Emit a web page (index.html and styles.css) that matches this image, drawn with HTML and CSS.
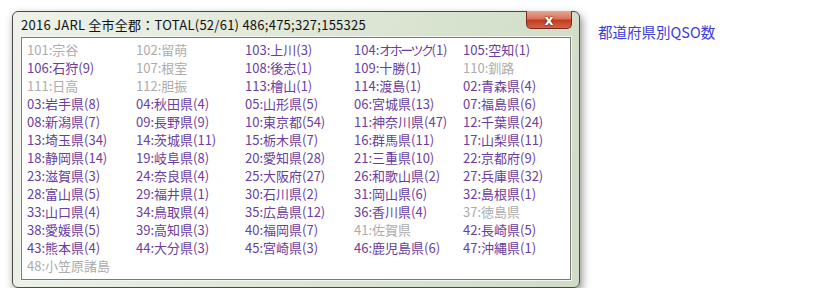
FILE: index.html
```html
<!DOCTYPE html>
<html lang="ja">
<head>
    <meta charset="UTF-8">
    <title>都道府県別QSO数</title>
    <link rel="stylesheet" href="styles.css">
</head>
<body>
    <div class="page">
        <div class="window">
            <div class="titlebar">
                <span class="title">2016 JARL 全市全郡：TOTAL(52/61) 486;475;327;155325</span>
                <button class="close-btn">x</button>
            </div>
            <div class="panel">
                <span class="off">101:宗谷</span>
                <span class="off">102:留萌</span>
                <span>103:上川(3)</span>
                <span>104:<span class="kana">オホーツク</span>(1)</span>
                <span>105:空知(1)</span>
                <span>106:石狩(9)</span>
                <span class="off">107:根室</span>
                <span>108:後志(1)</span>
                <span>109:十勝(1)</span>
                <span class="off">110:釧路</span>
                <span class="off">111:日高</span>
                <span class="off">112:胆振</span>
                <span>113:檜山(1)</span>
                <span>114:渡島(1)</span>
                <span>02:青森県(4)</span>
                <span>03:岩手県(8)</span>
                <span>04:秋田県(4)</span>
                <span>05:山形県(5)</span>
                <span>06:宮城県(13)</span>
                <span>07:福島県(6)</span>
                <span>08:新潟県(7)</span>
                <span>09:長野県(9)</span>
                <span>10:東京都(54)</span>
                <span>11:神奈川県(47)</span>
                <span>12:千葉県(24)</span>
                <span>13:埼玉県(34)</span>
                <span>14:茨城県(11)</span>
                <span>15:栃木県(7)</span>
                <span>16:群馬県(11)</span>
                <span>17:山梨県(11)</span>
                <span>18:静岡県(14)</span>
                <span>19:岐阜県(8)</span>
                <span>20:愛知県(28)</span>
                <span>21:三重県(10)</span>
                <span>22:京都府(9)</span>
                <span>23:滋賀県(3)</span>
                <span>24:奈良県(4)</span>
                <span>25:大阪府(27)</span>
                <span>26:和歌山県(2)</span>
                <span>27:兵庫県(32)</span>
                <span>28:富山県(5)</span>
                <span>29:福井県(1)</span>
                <span>30:石川県(2)</span>
                <span>31:岡山県(6)</span>
                <span>32:島根県(1)</span>
                <span>33:山口県(4)</span>
                <span>34:鳥取県(4)</span>
                <span>35:広島県(12)</span>
                <span>36:香川県(4)</span>
                <span class="off">37:徳島県</span>
                <span>38:愛媛県(5)</span>
                <span>39:高知県(3)</span>
                <span>40:福岡県(7)</span>
                <span class="off">41:佐賀県</span>
                <span>42:長崎県(5)</span>
                <span>43:熊本県(4)</span>
                <span>44:大分県(3)</span>
                <span>45:宮崎県(3)</span>
                <span>46:鹿児島県(6)</span>
                <span>47:沖縄県(1)</span>
                <span class="off">48:小笠原諸島</span>
            </div>
        </div>
        <a class="link" href="#">都道府県別QSO数</a>
    </div>
</body>
</html>
```

FILE: styles.css
```css
body {
    margin: 0;
    background-color: #fff;
    font-family: 'Noto Sans CJK JP', 'DejaVu Sans', sans-serif;
}
.page {
    display: flex;
    align-items: flex-start;
    gap: 18px;
    padding: 11px 0 0 12px;
}
.window {
    width: 568px;
    height: 277px;
    box-sizing: border-box;
    border: 1px solid #4a4a4a;
    border-radius: 6px;
    background: linear-gradient(100deg, #eef2ea 0%, #e2e9da 40%, #d8e3cf 70%, #d0dcc6 100%);
    box-shadow: 2px 4px 8px rgba(0, 0, 0, 0.45);
    padding: 0 8px 7px 8px;
    display: flex;
    flex-direction: column;
}
.titlebar {
    height: 25px;
    display: flex;
    justify-content: space-between;
    align-items: flex-start;
}
.title {
    font-size: 13px;
    color: #111;
    margin-top: 3px;
    letter-spacing: 0.25px;
}
.close-btn {
    width: 46px;
    height: 18px;
    margin-top: -1px;
    margin-right: -1px;
    border: 1px solid #7a2a1a;
    border-top: none;
    border-radius: 0 0 5px 5px;
    background: linear-gradient(#eaa493 0%, #d8745d 45%, #c23c1f 55%, #d5634a 100%);
    color: #fff;
    font-family: 'DejaVu Sans', sans-serif;
    font-weight: bold;
    font-size: 14px;
    line-height: 14px;
    padding: 0;
    text-shadow: 0 0 2px #5a1a10, 0 0 1px #5a1a10;
}
.panel {
    flex: 1;
    background-color: #fff;
    border: 1px solid #7a7a7a;
    box-shadow: 0 0 0 1px #f4f7f0;
    padding: 3px 0 0 5px;
    display: grid;
    grid-template-columns: repeat(5, 109px);
    grid-auto-rows: 18px;
    align-content: start;
}
.panel span {
    font-size: 13px;
    line-height: 18px;
    color: #6a3d9e;
    white-space: nowrap;
}
.panel .off {
    color: #acacac;
}
.panel .kana {
    letter-spacing: -2.5px;
}
.link {
    margin-top: 10px;
    font-size: 14.5px;
    color: #3c3cd6;
    text-decoration: none;
}
```
